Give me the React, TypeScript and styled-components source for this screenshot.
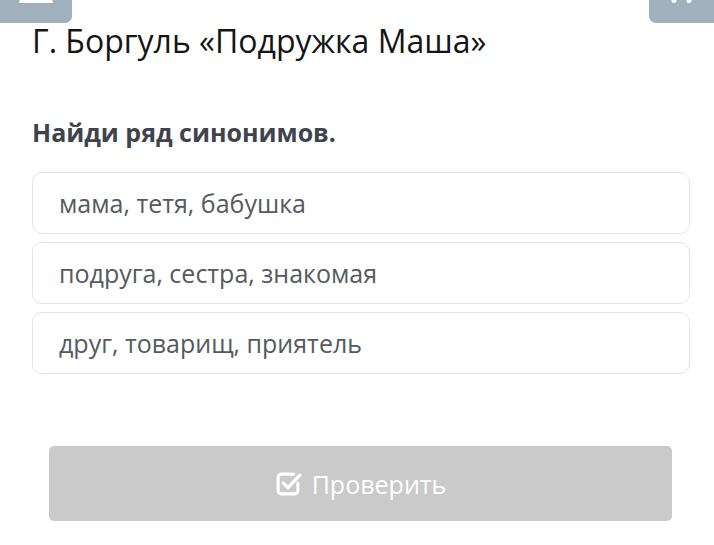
import React from "react";
import styled, { createGlobalStyle } from "styled-components";

const GlobalStyle = createGlobalStyle`
  html, body {
    margin: 0;
    padding: 0;
    background: #fff;
    font-family: "Open Sans", "Noto Sans", sans-serif;
  }
`;

const Page = styled.div`
  width: 714px;
  height: 545px;
  overflow: hidden;
`;

const TopBar = styled.div`
  display: flex;
  justify-content: space-between;
  height: 23px;
`;

const TopButton = styled.div<{ $width: number; $side: "left" | "right" }>`
  width: ${(p) => p.$width}px;
  height: 23px;
  background: #a0b1bd;
  border-bottom-${(p) => (p.$side === "left" ? "right" : "left")}-radius: 7px;
  display: flex;
  justify-content: center;
`;

const Content = styled.div`
  padding: 0 24px 0 32px;
`;

const Title = styled.h1`
  margin: 0;
  font-size: 32px;
  line-height: 35px;
  font-weight: 400;
  color: #151515;
`;

const Question = styled.h2`
  margin: 0;
  padding-top: 57px;
  font-size: 25px;
  line-height: 34px;
  font-weight: 700;
  color: #3e444c;
`;

const Options = styled.div`
  display: flex;
  flex-direction: column;
  gap: 8px;
  margin-top: 23px;
`;

const Option = styled.div`
  height: 62px;
  box-sizing: border-box;
  border: 1px solid #e4e4e4;
  border-radius: 10px;
  padding: 0 26px;
  display: flex;
  align-items: center;
  font-size: 25px;
  color: #555a60;
`;

const ButtonRow = styled.div`
  padding: 72px 18px 0 17px;
`;

const CheckButton = styled.button`
  width: 100%;
  height: 75px;
  border: none;
  border-radius: 5px;
  background: #cacaca;
  color: #fff;
  font-family: inherit;
  font-size: 25px;
  display: flex;
  align-items: center;
  justify-content: center;
  gap: 10px;
  padding: 0;
`;

const CheckIcon = () => (
  <svg width="27" height="27" viewBox="0 0 26 26" fill="none" stroke="#fff" strokeWidth="3" strokeLinecap="round" strokeLinejoin="round">
    <path d="M22 12.5V20a3 3 0 0 1-3 3H6a3 3 0 0 1-3-3V7a3 3 0 0 1 3-3h12" />
    <path d="M8 12.5l4.5 4.5L24 5" />
  </svg>
);

const options = ["мама, тетя, бабушка", "подруга, сестра, знакомая", "друг, товарищ, приятель"];

const App: React.FC = () => {
  return (
    <Page>
      <GlobalStyle />
      <TopBar>
        <TopButton $width={72} $side="left">
          <svg width="34" height="3" viewBox="0 0 34 3">
            <rect x="0" y="0" width="34" height="3" rx="1.5" fill="#fff" />
          </svg>
        </TopButton>
        <TopButton $width={65} $side="right">
          <svg width="24" height="3" viewBox="0 0 24 3">
            <circle cx="4" cy="0.5" r="2.5" fill="#fff" />
            <circle cx="19" cy="0.5" r="2.5" fill="#fff" />
          </svg>
        </TopButton>
      </TopBar>
      <Content>
        <Title>Г. Боргуль «Подружка Маша»</Title>
        <Question>Найди ряд синонимов.</Question>
        <Options>
          {options.map((o) => (
            <Option key={o}>{o}</Option>
          ))}
        </Options>
        <ButtonRow>
          <CheckButton>
            <CheckIcon />
            Проверить
          </CheckButton>
        </ButtonRow>
      </Content>
    </Page>
  );
};

export default App;
